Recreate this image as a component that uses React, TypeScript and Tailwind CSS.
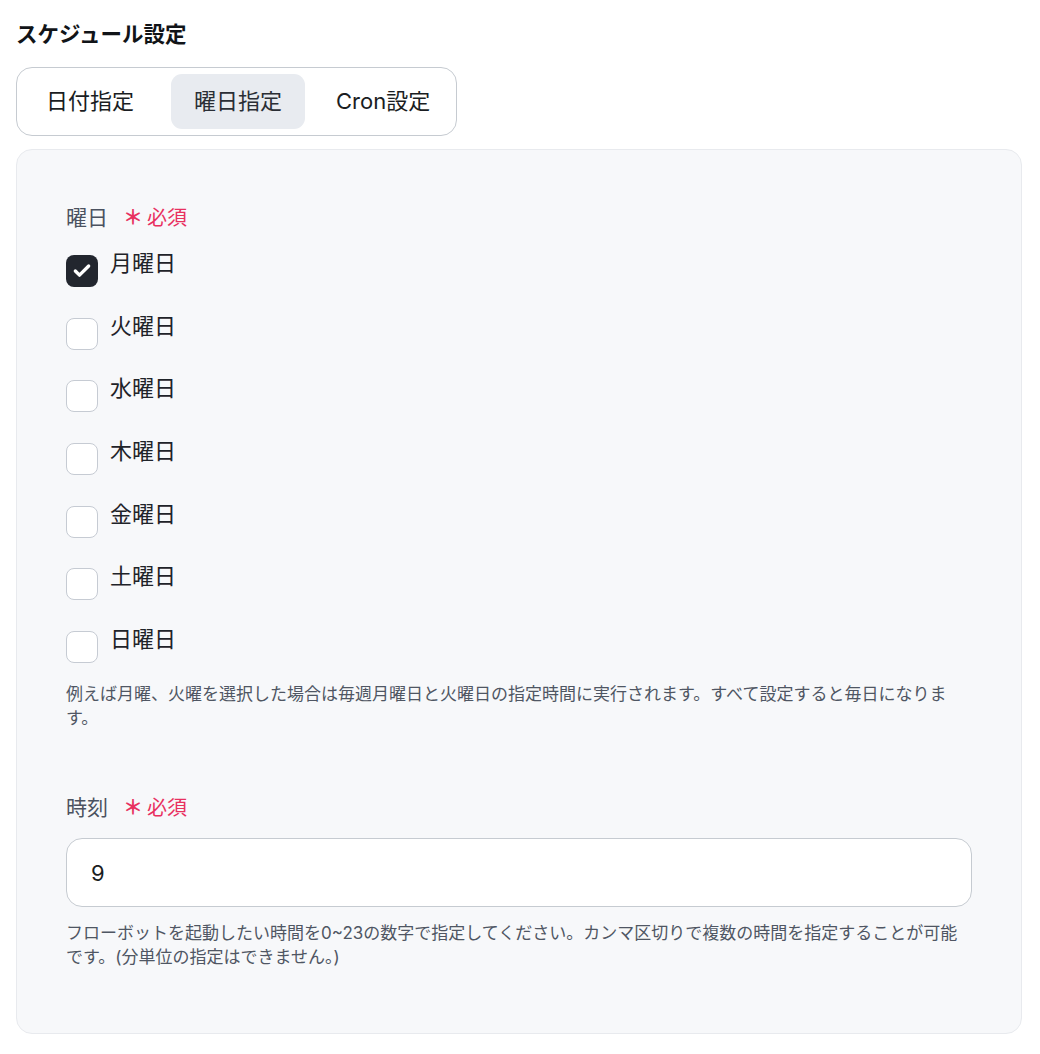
import { Check } from 'lucide-react';

const days = ['月曜日', '火曜日', '水曜日', '木曜日', '金曜日', '土曜日', '日曜日'];

function Required() {
  return (
    <span className="flex items-center gap-[4px] text-[20px] leading-7 text-[#e8305f]">
      <span className="font-bold">＊</span>
      <span>必須</span>
    </span>
  );
}

function FieldLabel({ text }: { text: string }) {
  return (
    <div className="flex items-center gap-[15px]">
      <span className="text-[21px] leading-7 text-[#4b5260]">{text}</span>
      <Required />
    </div>
  );
}

function DayCheckbox({ label, checked }: { label: string; checked?: boolean }) {
  return (
    <label className="flex items-start gap-3">
      {checked ? (
        <span className="flex h-8 w-8 shrink-0 items-center justify-center rounded-[8px] bg-[#22262e]">
          <Check size={20} strokeWidth={4} className="text-white" />
        </span>
      ) : (
        <span className="h-8 w-8 shrink-0 rounded-[8px] border border-[#c6cbd3] bg-white" />
      )}
      <span className="-mt-[3px] text-[22px] leading-[22px] text-[#1f2329]">{label}</span>
    </label>
  );
}

export default function App() {
  return (
    <div className="min-h-screen bg-white pl-4 pr-[18px] pt-[19px] font-['Inter','Noto_Sans_CJK_JP',sans-serif]">
      <h2 className="text-[21.5px] font-bold leading-[30px] text-[#111418]">スケジュール設定</h2>

      {/* Mode tabs */}
      <div className="mt-[18px] inline-flex rounded-[16px] border border-[#c6cbd1] bg-white p-[6px]">
        <button className="h-[55px] rounded-[11px] px-[23px] text-[22px] text-[#1a1d22]">日付指定</button>
        <button className="ml-[14px] h-[55px] rounded-[11px] bg-[#e8ebf0] px-[23px] text-[22px] text-[#2a2e35]">
          曜日指定
        </button>
        <button className="ml-[8px] h-[55px] rounded-[11px] pl-[23px] pr-[20px] text-[22px] text-[#1a1d22]">
          Cron設定
        </button>
      </div>

      {/* Settings panel */}
      <div className="mt-[13px] rounded-[16px] border border-[#e8eaee] bg-[#f7f8fa] pb-[64px] pl-[49px] pr-[49px] pt-[54px]">
        <FieldLabel text="曜日" />
        <div className="mt-[23px] flex flex-col gap-[30.7px]">
          {days.map((d, i) => (
            <DayCheckbox key={d} label={d} checked={i === 0} />
          ))}
        </div>
        <p className="mt-[19px] text-[17px] leading-6 text-[#4f5663]">
          例えば月曜、火曜を選択した場合は毎週月曜日と火曜日の指定時間に実行されます。すべて設定すると毎日になります。
        </p>

        <div className="mt-[64px]">
          <FieldLabel text="時刻" />
        </div>
        <input
          defaultValue="9"
          className="mt-[16px] h-[69px] w-full rounded-[16px] border border-[#c6cbd1] bg-white px-6 text-[22px] text-[#1a1d22] outline-none"
        />
        <p className="mt-[14px] text-[17px] leading-6 text-[#4f5663]">
          フローボットを起動したい時間を0~23の数字で指定してください。カンマ区切りで複数の時間を指定することが可能です。(分単位の指定はできません。)
        </p>
      </div>
    </div>
  );
}
